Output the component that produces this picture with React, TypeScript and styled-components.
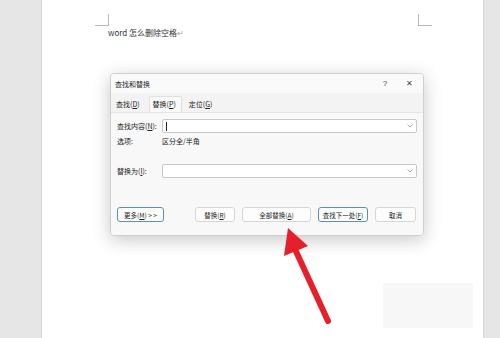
import React from "react";
import styled, { createGlobalStyle } from "styled-components";

const cjk = `"Noto Sans CJK SC", "Liberation Sans", sans-serif`;

const GlobalStyle = createGlobalStyle`
  html, body {
    margin: 0;
    padding: 0;
    background: #e6e6e6;
  }
  * {
    box-sizing: border-box;
  }
`;

const Screen = styled.div`
  position: relative;
  width: 500px;
  height: 338px;
  overflow: hidden;
  display: flex;
  padding-left: 41px;
  background: #e6e6e6;
  font-family: ${cjk};
`;

const Page = styled.div`
  width: 443px;
  height: 100%;
  background: #ffffff;
  border-left: 1px solid #d9d9d9;
  border-right: 1px solid #d4d4d4;
  display: flex;
  flex-direction: column;
`;

const MarginRow = styled.div`
  display: flex;
  justify-content: space-between;
  padding: 14px 51px 0 53px;
`;

const Corner = styled.div<{ side: "left" | "right" }>`
  width: 14px;
  height: 12px;
  border-bottom: 1px solid #b8b8b8;
  ${(p) =>
    p.side === "left"
      ? "border-right: 1px solid #b8b8b8;"
      : "border-left: 1px solid #b8b8b8;"}
`;

const DocLine = styled.div`
  padding-left: 66px;
  margin-top: 1px;
  font-size: 8px;
  line-height: 12px;
  color: #333333;
  span {
    color: #a0a0a0;
  }
`;

const Dialog = styled.div`
  margin: 34px 0 0 68px;
  width: 314px;
  height: 163px;
  background: #f3f3f3;
  border: 1px solid #cfcfcf;
  border-radius: 4px;
  box-shadow: 0 4px 18px rgba(0, 0, 0, 0.22);
  display: flex;
  flex-direction: column;
  overflow: hidden;
`;

const TitleBar = styled.div`
  height: 19px;
  background: #fafafa;
  display: flex;
  align-items: center;
  padding: 0 2px 0 4px;
  font-size: 7px;
  color: #222222;
`;

const Title = styled.div`
  flex: 1;
`;

const TitleButton = styled.div`
  width: 24px;
  text-align: center;
  font-family: "Liberation Sans", sans-serif;
  font-size: 8px;
  color: #444444;
`;

const Tabs = styled.div`
  display: flex;
  align-items: flex-end;
  padding: 3px 0 0 1px;
  height: 19px;
`;

const Tab = styled.div<{ active?: boolean }>`
  font-size: 7px;
  line-height: 15px;
  padding: 0 5px 0 3px;
  margin-right: 3px;
  color: #222222;
  background: ${(p) => (p.active ? "#f9f9f9" : "transparent")};
  border: 1px solid ${(p) => (p.active ? "#e0e0e0" : "transparent")};
  border-bottom: none;
  border-radius: 2px 2px 0 0;
`;

const Panel = styled.div`
  flex: 1;
  background: #f8f8f8;
  border-top: 1px solid #e4e4e4;
  padding: 6px 6px 0 6px;
  display: flex;
  flex-direction: column;
`;

const FieldRow = styled.div<{ gap?: number }>`
  display: flex;
  align-items: center;
  height: 14px;
  margin-top: ${(p) => p.gap ?? 0}px;
`;

const Label = styled.div`
  width: 45px;
  font-size: 7px;
  color: #222222;
  white-space: nowrap;
`;

const Value = styled.div`
  font-size: 7px;
  color: #222222;
`;

const Combo = styled.div`
  flex: 1;
  height: 14px;
  background: #ffffff;
  border: 1px solid #c8c8c8;
  border-radius: 2px;
  display: flex;
  align-items: center;
  justify-content: space-between;
  padding: 0 3px 0 3px;
`;

const Caret = styled.div`
  width: 1px;
  height: 9px;
  background: #222222;
`;

const Chevron = () => (
  <svg width="6" height="4" viewBox="0 0 6 4">
    <path d="M0.5 0.5 L3 3 L5.5 0.5" fill="none" stroke="#999" strokeWidth="0.8" />
  </svg>
);

const ButtonRow = styled.div`
  display: flex;
  align-items: center;
  margin-top: 29px;
  gap: 7px;
`;

const Button = styled.div<{ w: number; primary?: boolean; ml?: number }>`
  width: ${(p) => p.w}px;
  height: 15px;
  margin-left: ${(p) => p.ml ?? 0}px;
  background: #fdfdfd;
  border: 1px solid ${(p) => (p.primary ? "#5b8fc2" : "#d6d6d6")};
  border-radius: 3px;
  font-size: 6.5px;
  color: #222222;
  display: flex;
  align-items: center;
  justify-content: center;
  white-space: nowrap;
`;

const Overlay = styled.svg`
  position: absolute;
  left: 0;
  top: 0;
  pointer-events: none;
`;

const Smudge = styled.div`
  position: absolute;
  left: 383px;
  top: 283px;
  width: 90px;
  height: 45px;
  background: #f7f7f7;
`;

const App = () => {
  return (
    <>
      <GlobalStyle />
      <Screen>
        <Page>
          <MarginRow>
            <Corner side="left" />
            <Corner side="right" />
          </MarginRow>
          <DocLine>
            word 怎么删除空格<span>↵</span>
          </DocLine>
          <Dialog>
            <TitleBar>
              <Title>查找和替换</Title>
              <TitleButton>?</TitleButton>
              <TitleButton>✕</TitleButton>
            </TitleBar>
            <Tabs>
              <Tab>
                查找(<u>D</u>)
              </Tab>
              <Tab active>
                替换(<u>P</u>)
              </Tab>
              <Tab>
                定位(<u>G</u>)
              </Tab>
            </Tabs>
            <Panel>
              <FieldRow>
                <Label>
                  查找内容(<u>N</u>):
                </Label>
                <Combo>
                  <Caret />
                  <Chevron />
                </Combo>
              </FieldRow>
              <FieldRow gap={1}>
                <Label>选项:</Label>
                <Value>区分全/半角</Value>
              </FieldRow>
              <FieldRow gap={16}>
                <Label>
                  替换为(<u>I</u>):
                </Label>
                <Combo>
                  <span />
                  <Chevron />
                </Combo>
              </FieldRow>
              <ButtonRow>
                <Button w={47} primary>
                  更多(<u>M</u>) &gt; &gt;
                </Button>
                <Button w={40} ml={24}>
                  替换(<u>R</u>)
                </Button>
                <Button w={69}>
                  全部替换(<u>A</u>)
                </Button>
                <Button w={50} primary>
                  查找下一处(<u>F</u>)
                </Button>
                <Button w={41}>取消</Button>
              </ButtonRow>
            </Panel>
          </Dialog>
        </Page>
        <Smudge />
        <Overlay width="500" height="338" viewBox="0 0 500 338">
          <line x1="294" y1="247" x2="328" y2="321" stroke="#e5202b" strokeWidth="6" strokeLinecap="round" />
          <polygon points="288,228 284,256 308,246" fill="#e5202b" />
        </Overlay>
      </Screen>
    </>
  );
};

export default App;
